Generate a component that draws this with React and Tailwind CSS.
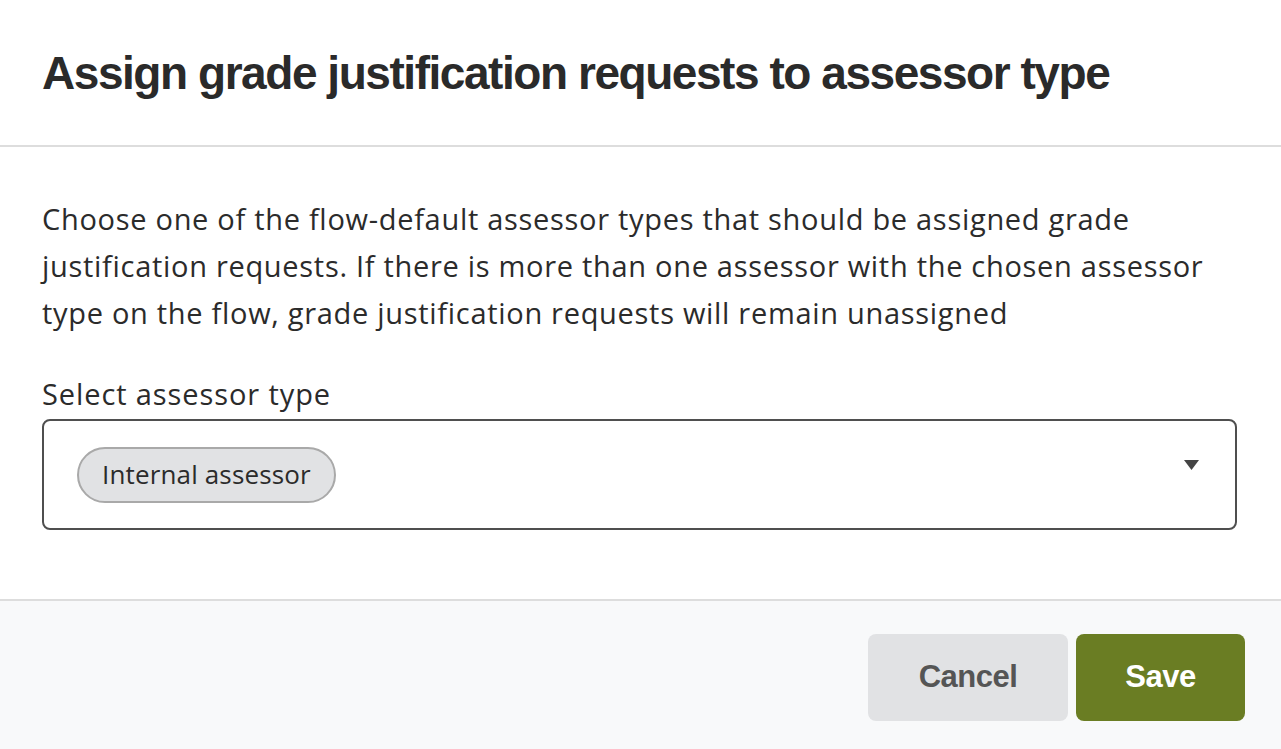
import { useState } from "react";

const headFont = { fontFamily: '"Liberation Sans", Arial, sans-serif' };
const bodyFont = { fontFamily: '"Open Sans", "Noto Sans", sans-serif' };

const AssignModal = () => {
  const [type] = useState("Internal assessor");

  return (
    <div className="min-h-screen flex flex-col bg-white text-[#2b2b2b]" style={bodyFont}>
      <div className="h-[147px] shrink-0 flex items-center px-[42px] border-b-2 border-[#dddddd]">
        <h1 className="text-[46px] font-bold tracking-[-1.45px] leading-none whitespace-nowrap text-[#2a2a2a]" style={headFont}>
          Assign grade justification requests to assessor type
        </h1>
      </div>

      <div className="h-[452px] shrink-0 flex flex-col pl-[42px] pr-[44px] pt-[48px]">
        <p className="text-[29px] leading-[47px] tracking-[0.7px]">
          Choose one of the flow-default assessor types that should be assigned grade
          <br />
          justification requests. If there is more than one assessor with the chosen assessor
          <br />
          type on the flow, grade justification requests will remain unassigned
        </p>

        <label className="mt-[34px] text-[29px] leading-[47px] tracking-[0.9px]">Select assessor type</label>

        <div className="mt-[2px] h-[111px] flex items-center justify-between border-2 border-[#4f4f4f] rounded-lg pl-[33px] pr-[36px]">
          <span className="h-[56px] flex items-center px-[23px] rounded-full border-2 border-[#a9a9a9] bg-[#e1e2e4] text-[26px] tracking-[0.15px] text-[#2b2b2b]">
            {type}
          </span>
          <svg className="mb-[19px]" width="15" height="10" viewBox="0 0 15 10">
            <path d="M0 0 H15 L7.5 10 Z" fill="#444" />
          </svg>
        </div>
      </div>

      <div className="flex-1 flex justify-end items-start gap-2 pt-[33px] pr-[36px] bg-[#f8f9fa] border-t-2 border-[#dddddd]">
        <button className="w-[200px] h-[87px] rounded-lg bg-[#e1e2e4] text-[#555555] text-[31px] tracking-[-0.5px] font-bold" style={headFont}>
          Cancel
        </button>
        <button className="w-[169px] h-[87px] rounded-lg bg-[#6a7d23] text-white text-[31px] tracking-[-0.5px] font-bold" style={headFont}>
          Save
        </button>
      </div>
    </div>
  );
};

export default function App() {
  return <AssignModal />;
}
